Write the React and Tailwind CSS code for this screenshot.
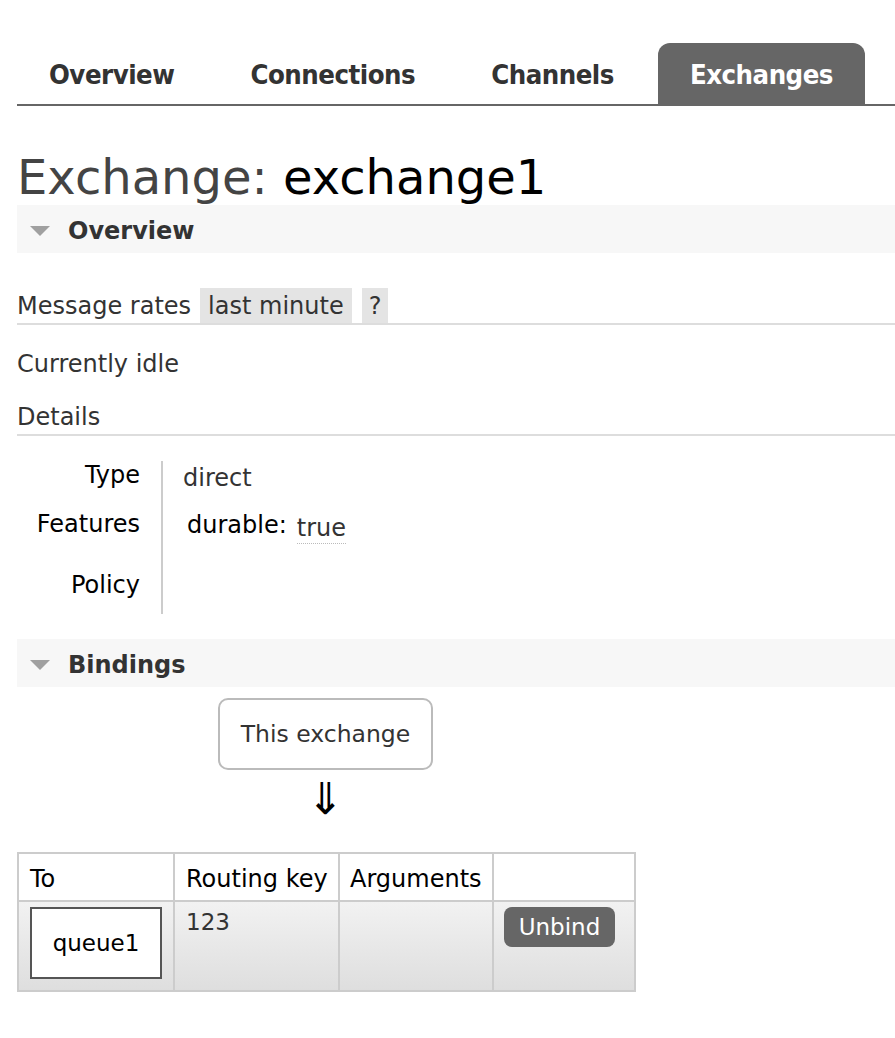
import React from "react";

function Tri() {
  return (
    <svg width="20" height="10" viewBox="0 0 20 10" className="shrink-0">
      <polygon points="0,0 20,0 10,10" fill="#a0a0a0" />
    </svg>
  );
}

function SectionHeader({ title }) {
  return (
    <div className="flex h-[48px] items-center bg-[#f7f7f7] pl-[13px] pt-[4px]">
      <Tri />
      <span className="ml-[18px] text-[24px] font-bold text-[#333]">{title}</span>
    </div>
  );
}

export default function App() {
  const tabs = ["Overview", "Connections", "Channels", "Exchanges"];
  return (
    <div
      className="min-h-screen bg-white pl-[17px] pt-[43px] text-[24px] leading-[28px] text-[#333]"
      style={{ fontFamily: '"DejaVu Sans", Verdana, sans-serif' }}
    >
      <nav className="flex gap-[12px] border-b-2 border-[#666]">
        {tabs.map((t) => (
          <div
            key={t}
            className={
              t === "Exchanges"
                ? "flex h-[61px] items-center rounded-t-[12px] bg-[#666] px-[32px] pt-[3px] text-white"
                : "flex h-[61px] items-center px-[32px] pt-[3px] text-[#333]"
            }
          >
            <span
              className="text-[27.3px] font-bold tracking-[-0.5px]"
              style={{ fontFamily: '"DejaVu Sans Condensed", "DejaVu Sans", sans-serif' }}
            >
              {t}
            </span>
          </div>
        ))}
      </nav>

      <h1 className="mt-[44px] text-[48px] leading-[55px] text-[#444]">
        Exchange: <span className="text-black">exchange1</span>
      </h1>

      <SectionHeader title="Overview" />

      <div className="mt-[35px] flex items-center border-b-2 border-[#ddd]">
        <span>Message rates</span>
        <span className="ml-[9px] flex h-[35px] items-center bg-[#e4e4e4] px-[8px]">last minute</span>
        <span className="ml-[10px] flex h-[35px] items-center bg-[#e4e4e4] px-[7px]">?</span>
      </div>

      <div className="mt-[25px]">Currently idle</div>
      <div className="mt-[25px] border-b-2 border-[#ddd] pb-[3px]">Details</div>

      <div className="mt-[25px] grid grid-cols-[144px_1fr]">
        <div className="h-[49px] pr-[21px] text-right text-black">Type</div>
        <div className="h-[49px] border-l-2 border-[#ccc] pl-[20px] pt-[3px]">direct</div>
        <div className="h-[61px] pr-[21px] text-right text-black">Features</div>
        <div className="h-[61px] border-l-2 border-[#ccc] pl-[24px]">
          <span className="text-black">durable:</span>
          <span className="relative top-[3px] ml-[10px] inline-block border-b border-dotted border-[#bbb] leading-[30px]">true</span>
        </div>
        <div className="h-[43px] pr-[21px] text-right text-black">Policy</div>
        <div className="h-[43px] border-l-2 border-[#ccc]"></div>
      </div>

      <div className="mt-[25px]">
        <SectionHeader title="Bindings" />
      </div>

      <div className="ml-[201px] mt-[11px] w-[215px]">
        <div className="flex h-[72px] items-center justify-center rounded-[10px] border-2 border-[#bbb] text-[23.5px]">
          This exchange
        </div>
        <div className="mt-[9px] text-center text-[44px] leading-[40px] text-black">⇓</div>
      </div>

      <table className="mt-[33px] w-[617px] table-fixed border-collapse whitespace-nowrap text-left">
        <thead>
          <tr className="h-[48px]">
            <th className="w-[156px] border-2 border-[#ccc] px-[11px] pt-[4px] font-normal text-black">To</th>
            <th className="w-[165px] border-2 border-[#ccc] px-[11px] pt-[4px] font-normal text-black">Routing key</th>
            <th className="w-[154px] border-2 border-[#ccc] px-[10px] pt-[4px] font-normal text-black">Arguments</th>
            <th className="w-[142px] border-2 border-[#ccc] px-[10px] font-normal text-black"></th>
          </tr>
        </thead>
        <tbody>
          <tr className="h-[90px] bg-gradient-to-b from-[#f2f2f2] to-[#dedede]">
            <td className="border-2 border-[#ccc] px-[11px] align-top pt-[5px]">
              <div className="flex h-[72px] w-[132px] items-center justify-center border-2 border-[#555] bg-white text-[23px] text-black">
                queue1
              </div>
            </td>
            <td className="border-2 border-[#ccc] px-[11px] align-top pt-[6px] text-[23px]">123</td>
            <td className="border-2 border-[#ccc] align-top"></td>
            <td className="border-2 border-[#ccc] px-[10px] align-top pt-[5px]">
              <button className="flex h-[40px] w-[111px] items-center justify-center rounded-[8px] bg-[#666] text-[23px] text-white">
                Unbind
              </button>
            </td>
          </tr>
        </tbody>
      </table>
    </div>
  );
}
